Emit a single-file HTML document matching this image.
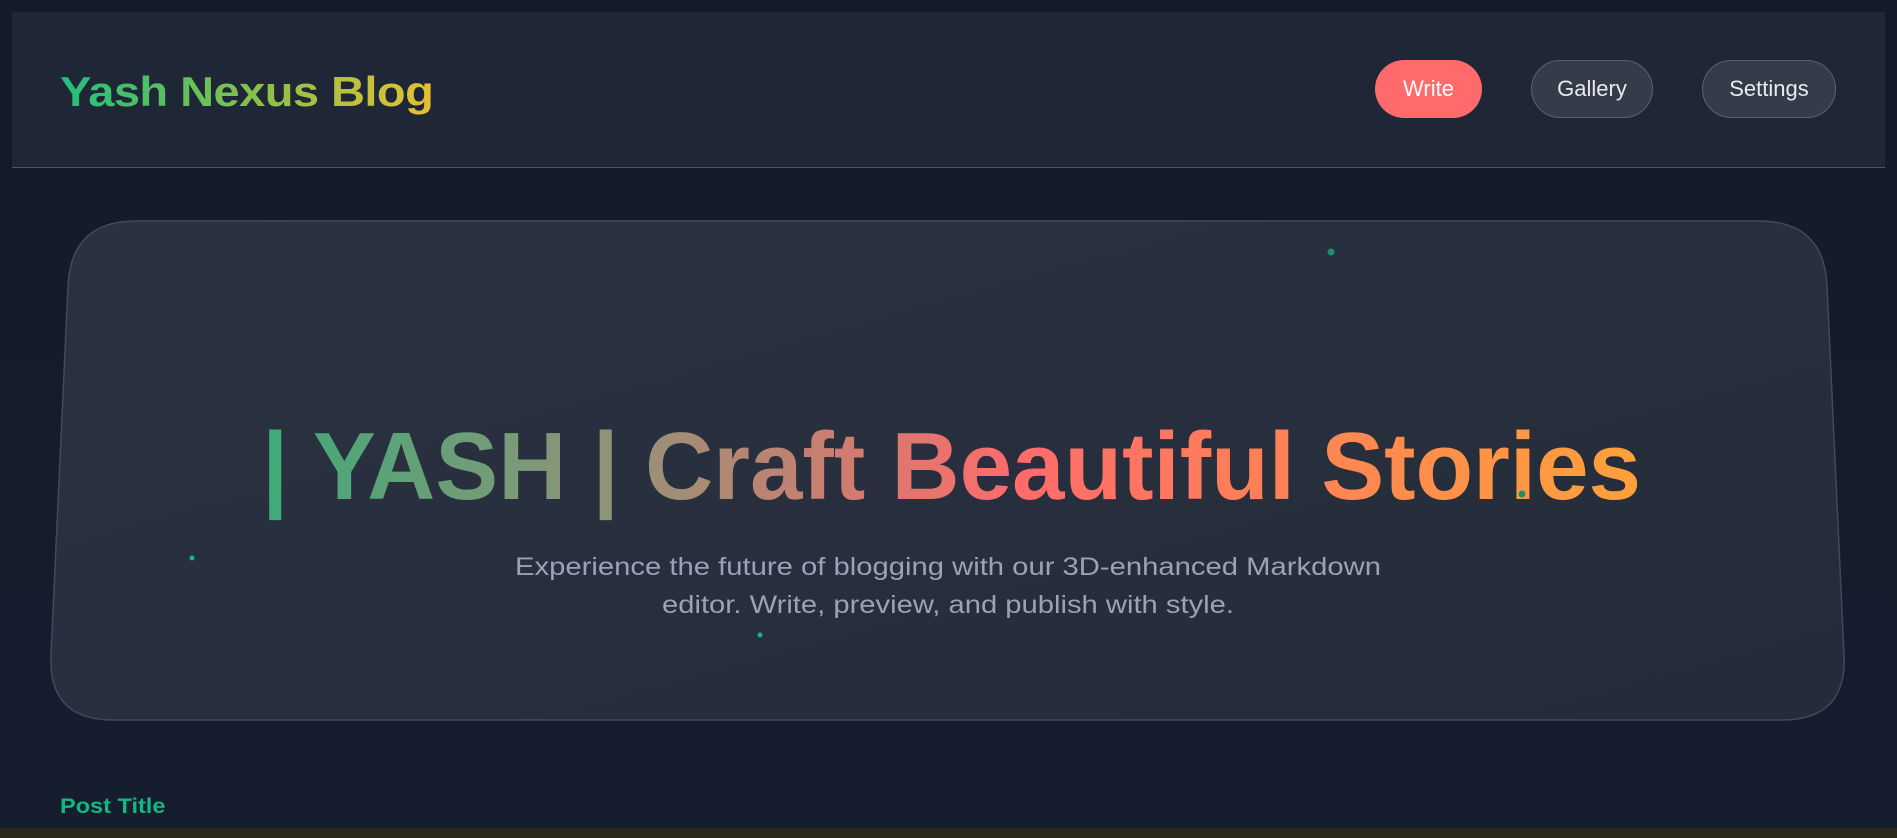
<!DOCTYPE html>
<html><head><meta charset="utf-8"><style>
html,body{margin:0;padding:0}
body{width:1897px;height:838px;overflow:hidden;background:linear-gradient(180deg,#141a29 0%,#161d2e 100%);font-family:"Liberation Sans",sans-serif;position:relative}
.hdr{position:absolute;left:12px;top:12px;width:1873px;height:155px;background:#1f2737;border-bottom:1px solid #4b5563}
.logo{position:absolute;left:48px;top:56px;font-size:42px;font-weight:bold;background:linear-gradient(90deg,#22c07a,#8cc04a 55%,#e8c030);-webkit-background-clip:text;background-clip:text;color:transparent;letter-spacing:-0.5px;transform:scaleX(1.12);transform-origin:left center;white-space:nowrap}
.btn{position:absolute;top:60px;height:58px;border-radius:29px;box-sizing:border-box;color:#e8eaef;font-size:22px;display:flex;align-items:center;justify-content:center}
.g{background:#343c4a;border:1px solid #5a6270}
.post{position:absolute;left:60px;top:795px;color:#10b981;font-weight:bold;font-size:21px;transform:scaleX(1.12);transform-origin:left center}
.strip{position:absolute;left:0;top:828px;width:1897px;height:10px;background:#2b2918}
</style></head><body>
<div class="hdr">
<div class="logo">Yash Nexus Blog</div>
</div>
<div class="btn" style="left:1375px;width:107px;background:#ff6b6b;color:#fff">Write</div>
<div class="btn g" style="left:1531px;width:122px">Gallery</div>
<div class="btn g" style="left:1702px;width:134px">Settings</div>
<svg style="position:absolute;left:0;top:0" width="1897" height="838">
<defs>
<linearGradient id="cg" x1="0" y1="0" x2="1" y2="1"><stop offset="0" stop-color="#2b3140"/><stop offset="1" stop-color="#242c3a"/></linearGradient>
<linearGradient id="tg" x1="262" y1="0" x2="1641" y2="0" gradientUnits="userSpaceOnUse">
<stop offset="0" stop-color="#3faa78"/><stop offset="0.25" stop-color="#8f9478"/><stop offset="0.55" stop-color="#ff6b6b"/><stop offset="1" stop-color="#ffa13a"/></linearGradient>
</defs>
<path d="M136,221 L1759,221 Q1824,221 1827,286 L1844,655 Q1847,720 1782,720 L113,720 Q48,720 51,655 L68,286 Q71,221 136,221 Z" fill="url(#cg)" stroke="#424a5a" stroke-width="1.5"/>
<text x="262" y="499" textLength="1379" lengthAdjust="spacingAndGlyphs" font-family="Liberation Sans, sans-serif" font-weight="bold" font-size="96" fill="url(#tg)">| YASH | Craft Beautiful Stories</text>
<text x="948" y="575" text-anchor="middle" font-family="Liberation Sans, sans-serif" font-size="25" fill="#9aa3b5" textLength="866" lengthAdjust="spacingAndGlyphs">Experience the future of blogging with our 3D-enhanced Markdown</text>
<text x="948" y="613" text-anchor="middle" font-family="Liberation Sans, sans-serif" font-size="25" fill="#9aa3b5" textLength="572" lengthAdjust="spacingAndGlyphs">editor. Write, preview, and publish with style.</text>
<circle cx="1331" cy="252" r="3.5" fill="#1e8f6a"/>
<circle cx="192" cy="558" r="2.5" fill="#10b981"/>
<circle cx="760" cy="635" r="2.5" fill="#10b981"/>
<circle cx="1522" cy="494" r="3.5" fill="#1e8f6a"/>
</svg>
<div class="post">Post Title</div>
<div class="strip"></div>
</body></html>
